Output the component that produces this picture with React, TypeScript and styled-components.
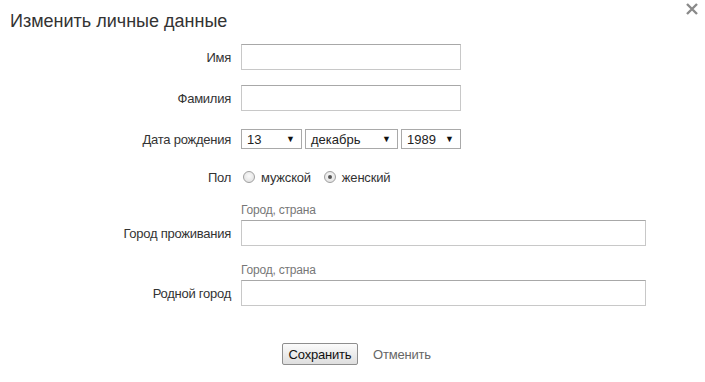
import React from "react";
import styled, { createGlobalStyle } from "styled-components";

const Global = createGlobalStyle`
  html, body { margin: 0; padding: 0; background: #fff; }
  body { font-family: "Liberation Sans", Arial, sans-serif; color: #333; }
`;

const Dialog = styled.div`
  position: relative;
  width: 705px;
  height: 382px;
  box-sizing: border-box;
  padding: 10px 0 0 10px;
`;

const Title = styled.h1`
  margin: 0;
  font-size: 18px;
  font-weight: normal;
  line-height: 22px;
  color: #333;
`;

const Close = styled.button`
  position: absolute;
  top: 2px;
  right: 6px;
  width: 14px;
  height: 14px;
  padding: 0;
  border: 0;
  background: none;
  cursor: pointer;
  display: flex;
`;

const Form = styled.div`
  display: grid;
  grid-template-columns: 221px auto;
  column-gap: 10px;
  margin-top: 12px;
`;

const Label = styled.div`
  grid-column: 1;
  text-align: right;
  font-size: 13px;
  letter-spacing: -0.25px;
  color: #333;
  align-self: center;
  white-space: nowrap;
`;

const Field = styled.div`
  grid-column: 2;
  display: flex;
  align-items: center;
  gap: 3px;
`;

const Spacer = styled.div<{ $h: number }>`
  grid-column: 1 / 3;
  height: ${(p) => p.$h}px;
`;

const Hint = styled.div`
  grid-column: 2;
  font-size: 12px;
  letter-spacing: -0.2px;
  color: #777;
  line-height: 14px;
  margin-bottom: 3px;
`;

const Input = styled.input<{ $w: number }>`
  box-sizing: border-box;
  width: ${(p) => p.$w}px;
  height: 26px;
  margin: 0;
  border: 1px solid #c8c8c8;
  border-top-color: #a8a8a8;
  background: #fff;
  font: 13px "Liberation Sans", Arial, sans-serif;
  padding: 0 4px;
  outline: none;
`;

const Select = styled.div<{ $w: number }>`
  box-sizing: border-box;
  width: ${(p) => p.$w}px;
  height: 20px;
  border: 1px solid #a9a9a9;
  background: #fff;
  display: flex;
  align-items: center;
  justify-content: space-between;
  padding: 0 6px 0 5px;
  font-size: 13px;
  color: #222;
`;

const Arrow = styled.span`
  font-size: 9px;
  color: #111;
`;

const RadioGroup = styled.div`
  display: flex;
  align-items: center;
  gap: 11px;
  height: 20px;
`;

const RadioItem = styled.label`
  display: flex;
  align-items: center;
  gap: 6px;
  font-size: 13px;
  letter-spacing: -0.2px;
  color: #333;
`;

const RadioDot = styled.span<{ $checked?: boolean }>`
  box-sizing: border-box;
  width: 12px;
  height: 12px;
  border-radius: 50%;
  border: 1px solid #a0a0a0;
  background: radial-gradient(circle at 50% 40%, #fafafa 0%, #dcdcdc 100%);
  display: flex;
  align-items: center;
  justify-content: center;
  margin-left: 2px;
  &::after {
    content: "";
    width: 4px;
    height: 4px;
    border-radius: 50%;
    background: ${(p) => (p.$checked ? "#555" : "transparent")};
  }
`;

const Actions = styled.div`
  display: flex;
  align-items: center;
  gap: 15px;
  margin-left: 272px;
  margin-top: 37px;
`;

const SaveButton = styled.button`
  box-sizing: border-box;
  width: 76px;
  height: 22px;
  padding: 0;
  border: 1px solid #8e8e8e;
  border-radius: 2px;
  background: linear-gradient(#fbfbfb, #dedede);
  font: 13px "Liberation Sans", Arial, sans-serif;
  letter-spacing: -0.2px;
  color: #111;
`;

const CancelLink = styled.a`
  font-size: 13px;
  letter-spacing: -0.2px;
  color: #666;
  text-decoration: none;
`;

export default function App() {
  return (
    <>
      <Global />
      <Dialog>
        <Title>Изменить личные данные</Title>
        <Close aria-label="Закрыть">
          <svg width="14" height="14" viewBox="0 0 14 14">
            <path d="M2 2 L12 12 M12 2 L2 12" stroke="#8a8a8a" strokeWidth="2.4" strokeLinecap="butt" />
          </svg>
        </Close>
        <Form>
          <Label>Имя</Label>
          <Field>
            <Input $w={220} />
          </Field>
          <Spacer $h={15} />
          <Label>Фамилия</Label>
          <Field>
            <Input $w={220} />
          </Field>
          <Spacer $h={18} />
          <Label>Дата рождения</Label>
          <Field>
            <Select $w={61}>
              <span>13</span>
              <Arrow>▼</Arrow>
            </Select>
            <Select $w={93}>
              <span>декабрь</span>
              <Arrow>▼</Arrow>
            </Select>
            <Select $w={60}>
              <span>1989</span>
              <Arrow>▼</Arrow>
            </Select>
          </Field>
          <Spacer $h={18} />
          <Label>Пол</Label>
          <Field>
            <RadioGroup>
              <RadioItem>
                <RadioDot />
                мужской
              </RadioItem>
              <RadioItem>
                <RadioDot $checked />
                женский
              </RadioItem>
            </RadioGroup>
          </Field>
          <Spacer $h={16} />
          <Hint>Город, страна</Hint>
          <Label>Город проживания</Label>
          <Field>
            <Input $w={405} />
          </Field>
          <Spacer $h={17} />
          <Hint>Город, страна</Hint>
          <Label>Родной город</Label>
          <Field>
            <Input $w={405} />
          </Field>
        </Form>
        <Actions>
          <SaveButton>Сохранить</SaveButton>
          <CancelLink href="#">Отменить</CancelLink>
        </Actions>
      </Dialog>
    </>
  );
}
